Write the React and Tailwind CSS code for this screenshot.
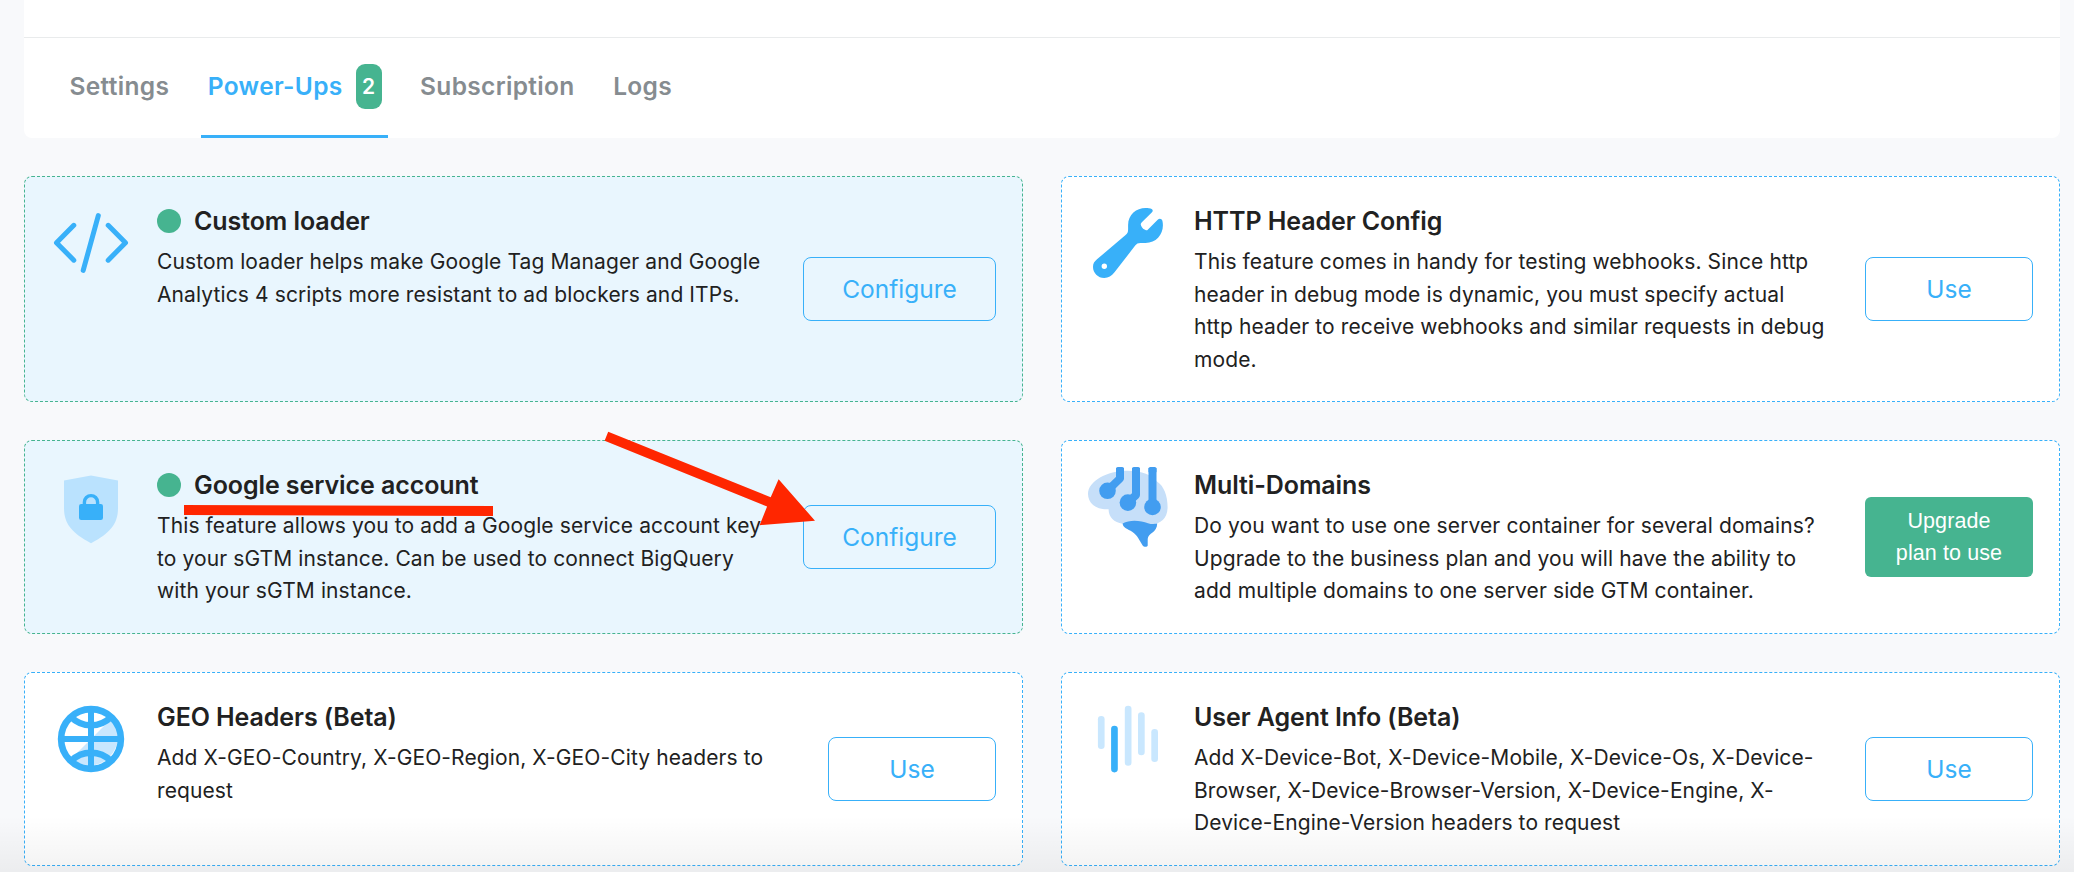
const TABS = [
  { label: "Settings" },
  { label: "Power-Ups", count: 2, active: true },
  { label: "Subscription" },
  { label: "Logs" },
]

const CodeIcon = () => (
  <svg viewBox="0 0 80 84" fill="none" stroke="#38b0f9" strokeWidth="5" strokeLinecap="round" strokeLinejoin="round" className="w-20 h-21">
    <path d="M22.8 25.3 5.5 42.7l17.3 17.5M57.2 25.3 74.5 42.7 57.2 60.2M47.3 15.6 32.2 70.4" />
  </svg>
)

const WrenchIcon = () => (
  <svg viewBox="0 0 80 84" className="w-20 h-21">
    <path
      fill="#38b0f9"
      fillRule="evenodd"
      d="M63.7 9C65 9.6 65 11.3 64 12.3L53.6 22.6C52.6 23.6 52.6 24.4 53 25.6C54 28.4 56 29.7 58 30.2C58.8 30.4 59.3 30.1 60 29.4L69.7 19.7C71.3 18.1 73.8 18.5 74.4 20.8C77 32 69.5 43 57.5 43H52.5C50 43 48.6 43.7 47.2 45.6L26.5 72.3C23.5 76 20.5 78 16.3 78C10 78 5 73 5 67C5 63.4 6.4 61.6 9 59.3L37.3 35.2C39.5 33.3 40.1 32.3 40.1 29.5V25C40.1 14.5 48.5 8 57.5 8C60 8 62.3 8.3 63.7 9ZM16.3 63.6a2.7 2.7 0 1 0 0 5.4a2.7 2.7 0 0 0 0-5.4Z"
    />
  </svg>
)

const ShieldIcon = () => (
  <svg viewBox="0 0 80 84" className="w-20 h-21">
    <path fill="#bae2fe" d="M40 11.5 67 16.5V44C67 60 59 69 40 79.2C21 69 13 60 13 44V16.5Z" />
    <rect x="28" y="40" width="24" height="16" rx="2.2" fill="#38b0f9" />
    <path d="M33.4 42V38.2a6.6 6.6 0 0 1 13.2 0V42" fill="none" stroke="#38b0f9" strokeWidth="3.4" />
  </svg>
)

const BrainIcon = () => (
  <svg viewBox="0 0 80 84" className="w-20 h-21">
    <path
      fill="#c6dff9"
      d="M0 30C0 17 19 6.7 39.5 6.7C54 6.7 64 11 69 17.5C76 22 79.6 32 79.6 43C79.6 54 73 60 63 60.5C54 58.5 44 56 34.5 59.8C26 58.5 20.5 53 20.6 45.3C8 46 0 39 0 30Z"
    />
    <g fill="none" stroke="#429df0" strokeWidth="8" strokeLinejoin="round">
      <path d="M32 4V14.5L19.5 26.7M48 4V31L39.9 38.7M64.5 4V43" />
    </g>
    <g fill="#429df0">
      <rect x="28" y="3" width="8" height="6" rx="1.8" />
      <rect x="44" y="3" width="8" height="6" rx="1.8" />
      <rect x="60.5" y="3" width="8" height="6" rx="1.8" />
      <circle cx="19.5" cy="26.8" r="8.3" />
      <circle cx="39.9" cy="38.6" r="8.3" />
      <circle cx="64.5" cy="43" r="8.3" />
      <path d="M34.6 59.6C42 55 53 56.6 60 59.2C63 60.2 66 60.3 69.2 59.6C69.2 69 60 69 59.7 75V81.5C59.7 83 56 83.2 55 82C51 76 50 72 44.5 68C39.5 65 35 64 34.6 59.6Z" />
    </g>
  </svg>
)

const GlobeIcon = () => (
  <svg viewBox="0 0 80 84" className="w-20 h-21">
    <path fill="#c9e7fe" d="M61 22A30 30 0 0 1 19 64Z" />
    <g fill="none" stroke="#38b0f9" strokeWidth="6.6">
      <circle cx="40" cy="43" r="29.9" />
      <path d="M40 13V73M10 43H70" strokeWidth="6" />
      <path d="M20 21C25 26 32 29.3 40 29.3S55 26 60 21M20 65C25 60 32 56.7 40 56.7S55 60 60 65" />
    </g>
  </svg>
)

const BarsIcon = () => (
  <svg viewBox="0 0 80 84" fill="#c9e7fe" className="w-20 h-21">
    <rect x="9.9" y="20" width="6.7" height="33" rx="3.3" />
    <rect x="23.1" y="29.7" width="6.7" height="46.7" rx="3.3" fill="#38b0f9" />
    <rect x="36.8" y="9.7" width="6.7" height="60" rx="3.3" />
    <rect x="50" y="16.3" width="6.7" height="43" rx="3.3" />
    <rect x="63.3" y="33" width="6.7" height="33" rx="3.3" />
  </svg>
)

const POWER_UPS = [
  {
    icon: CodeIcon,
    title: "Custom loader",
    desc: "Custom loader helps make Google Tag Manager and Google Analytics 4 scripts more resistant to ad blockers and ITPs.",
    action: "configure",
  },
  {
    icon: WrenchIcon,
    title: "HTTP Header Config",
    desc: "This feature comes in handy for testing webhooks. Since http header in debug mode is dynamic, you must specify actual http header to receive webhooks and similar requests in debug mode.",
    action: "use",
  },
  {
    icon: ShieldIcon,
    title: "Google service account",
    desc: "This feature allows you to add a Google service account key to your sGTM instance. Can be used to connect BigQuery with your sGTM instance.",
    action: "configure",
  },
  {
    icon: BrainIcon,
    title: "Multi-Domains",
    desc: "Do you want to use one server container for several domains? Upgrade to the business plan and you will have the ability to add multiple domains to one server side GTM container.",
    action: "upgrade",
  },
  {
    icon: GlobeIcon,
    title: "GEO Headers (Beta)",
    desc: "Add X-GEO-Country, X-GEO-Region, X-GEO-City headers to request",
    action: "use",
  },
  {
    icon: BarsIcon,
    title: "User Agent Info (Beta)",
    desc: "Add X-Device-Bot, X-Device-Mobile, X-Device-Os, X-Device-Browser, X-Device-Browser-Version, X-Device-Engine, X-Device-Engine-Version headers to request",
    action: "use",
  },
]

function ActionButton({ action }) {
  if (action === "upgrade") {
    return (
      <button className="w-[168px] h-20 shrink-0 rounded-md bg-[#46b490] px-6 text-center font-['Liberation_Sans',sans-serif] text-[21.5px] tracking-[0.1px] leading-8 text-white">
        Upgrade plan to use
      </button>
    )
  }
  const width = action === "configure" ? "w-[193px]" : "w-[168px]"
  return (
    <button className={`${width} h-16 shrink-0 rounded-lg border border-[#38b0f9] text-[24.5px] text-[#38b0f9]`}>
      {action === "configure" ? "Configure" : "Use"}
    </button>
  )
}

function PowerUpCard({ item }) {
  const Icon = item.icon
  const enabled = item.action === "configure"
  return (
    <div
      className={`flex items-center rounded-lg border border-dashed pt-6 pb-6 px-[26px] ${
        enabled ? "border-[#46b490] bg-[#e9f6fe]" : "border-[#38b0f9] bg-white"
      }`}
    >
      <div className="w-[106px] shrink-0 self-start -mt-px">
        <Icon />
      </div>
      <div className="flex-1 self-start pr-[37px]">
        <div className="flex items-center h-[41px]">
          {enabled && <span className="w-6 h-6 mr-[13px] -mt-0.5 rounded-full bg-[#46b490]" />}
          <h3 className="text-[25px] font-semibold tracking-[-0.08px] text-[#212121]">{item.title}</h3>
        </div>
        <p className="mt-1 text-[21px] leading-[32.7px] tracking-[0.11px] text-[#212121]">{item.desc}</p>
      </div>
      <ActionButton action={item.action} />
    </div>
  )
}

export default function App() {
  return (
    <div className="relative w-full h-[872px] overflow-hidden bg-[#f8f9fb] pl-6 pr-3.5 font-['Inter',sans-serif]">
      <div className="h-[138px] rounded-b-lg bg-white">
        <div className="h-[38px] border-b border-[#e9ebec]" />
        <nav className="flex h-[100px] pl-[39px]">
          {TABS.map((tab) => (
            <div
              key={tab.label}
              className={`flex items-center px-[6.5px] mr-[25.5px] border-b-3 text-[24.5px] font-semibold tracking-[0.33px] ${
                tab.active ? "border-[#38b0f9] text-[#38b0f9]" : "border-transparent text-[#868c90]"
              }`}
            >
              {tab.label}
              {tab.count && (
                <span className="flex items-center justify-center w-[26px] h-[45px] ml-[13px] rounded-[9px] bg-[#46b490] text-[21px] text-white">
                  {tab.count}
                </span>
              )}
            </div>
          ))}
        </nav>
      </div>

      <div className="grid grid-cols-2 grid-rows-[226px_194px_194px] gap-[38px] mt-[38px]">
        {POWER_UPS.map((item) => (
          <PowerUpCard key={item.title} item={item} />
        ))}
      </div>

      {/* Walkthrough marks: underline and arrow */}
      <svg viewBox="0 0 2074 872" className="absolute inset-0 w-full h-full pointer-events-none" fill="#ff2600">
        <path d="M184 505 493 506V516L184 515Z" />
        <path d="M608.2 431.8 770.7 497.3 778.6 479.3 815 520.7 759.6 525.2 767.1 506.5 604.6 440.8Z" />
      </svg>
      <div className="absolute inset-x-0 bottom-0 h-14 bg-linear-to-b from-black/0 to-black/5 pointer-events-none" />
    </div>
  )
}
